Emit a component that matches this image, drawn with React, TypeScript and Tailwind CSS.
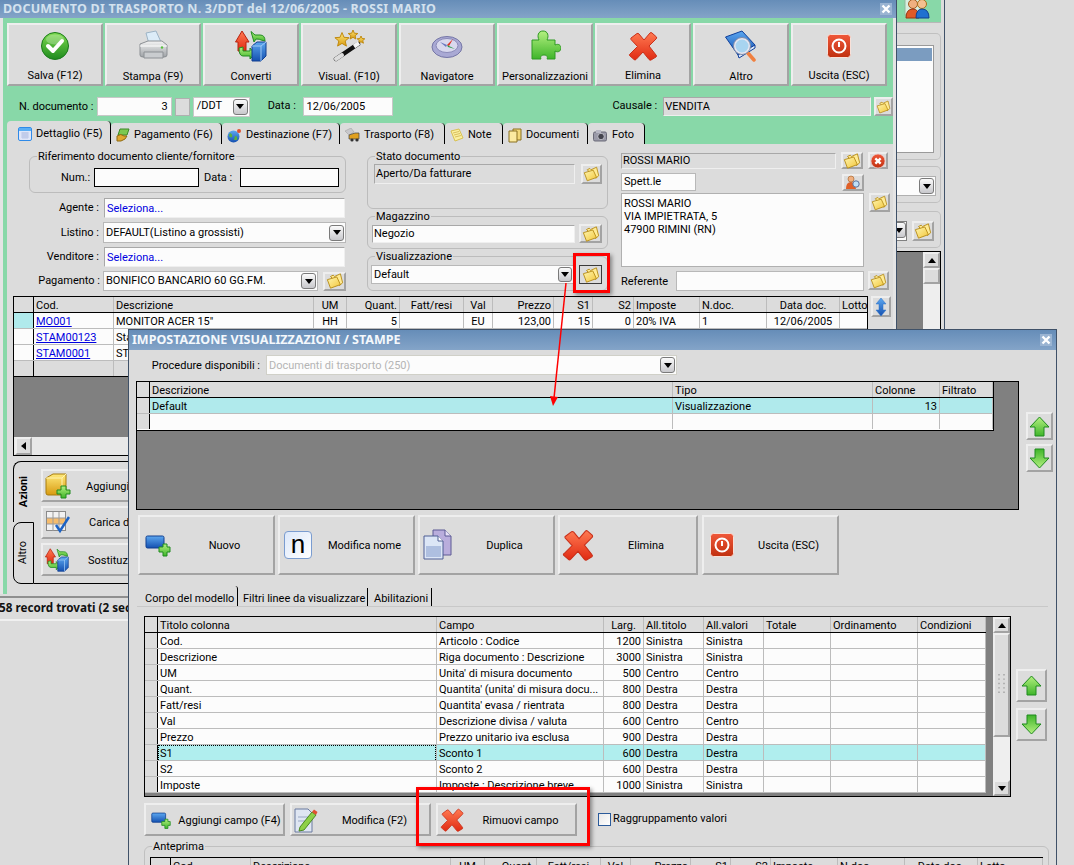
import React from 'react';

// --- icons ---
function Defs() {
  return (
    <svg className="absolute w-0 h-0">
      <defs>
        <linearGradient id="gGreen" x1="0" y1="0" x2="0" y2="1"><stop offset="0" stopColor="#7fdc50" /><stop offset="1" stopColor="#1e8a1e" /></linearGradient>
        <linearGradient id="gLime" x1="0" y1="0" x2="0" y2="1"><stop offset="0" stopColor="#b4f080" /><stop offset="1" stopColor="#3fb52a" /></linearGradient>
        <linearGradient id="gRed" x1="0" y1="0" x2="0" y2="1"><stop offset="0" stopColor="#ff7a52" /><stop offset="1" stopColor="#e02a12" /></linearGradient>
        <linearGradient id="gPower" x1="0" y1="0" x2="0" y2="1"><stop offset="0" stopColor="#f0583a" /><stop offset="1" stopColor="#c0300f" /></linearGradient>
        <linearGradient id="gFolder" x1="0" y1="0" x2="1" y2="1"><stop offset="0" stopColor="#fff6b0" /><stop offset="1" stopColor="#f2c63a" /></linearGradient>
        <linearGradient id="gBlue" x1="0" y1="0" x2="0" y2="1"><stop offset="0" stopColor="#5da8f0" /><stop offset="1" stopColor="#1450b0" /></linearGradient>
        <linearGradient id="gGrey" x1="0" y1="0" x2="0" y2="1"><stop offset="0" stopColor="#f4f4f4" /><stop offset="1" stopColor="#9ea2a6" /></linearGradient>
        <linearGradient id="gGold" x1="0" y1="0" x2="0" y2="1"><stop offset="0" stopColor="#ffe97a" /><stop offset="1" stopColor="#d89a10" /></linearGradient>
      </defs>
    </svg>
  );
}

const Folder = () => (
  <svg width="18" height="18" viewBox="0 0 20 20">
    <path d="M5 5 L8 3.5 L9.5 5 L16 2 L18.5 12 L15 15 Z" fill="#ffeb94" stroke="#b58a14" strokeLinejoin="round" />
    <path d="M1.5 8.5 L12 5.5 L16 14 L5 18 Z" fill="url(#gFolder)" stroke="#b58a14" strokeLinejoin="round" />
  </svg>
);

const DropArrow = ({ cls = 'w-[15px] h-[16px]' }: { cls?: string }) => (
  <span className={`${cls} shrink-0 flex items-center justify-center rounded-[3px] border border-[#7a7a7a] bg-gradient-to-b from-[#fbfbfb] to-[#c8c8cc]`}>
    <svg width="8" height="5" viewBox="0 0 8 5"><path d="M0 0 H8 L4 5 Z" fill="#000" /></svg>
  </span>
);

const CheckIcon = () => (
  <svg width="30" height="30" viewBox="0 0 30 30">
    <circle cx="15" cy="15" r="13.5" fill="url(#gGreen)" stroke="#1a7a1a" />
    <ellipse cx="15" cy="8.5" rx="9" ry="5" fill="#fff" opacity=".25" />
    <path d="M8 15 L13 20 L22 10" fill="none" stroke="#fff" strokeWidth="4" strokeLinecap="round" strokeLinejoin="round" />
  </svg>
);

const PrinterIcon = () => (
  <svg width="32" height="32" viewBox="0 0 32 32">
    <path d="M9 3 L19 1 L24 12 L12 14 Z" fill="#dcecf8" stroke="#9db4c6" />
    <path d="M3 14 L11 11 H25 L30 15 V25 Q30 27 27 27 H6 Q3 27 3 25 Z" fill="url(#gGrey)" stroke="#8c9094" />
    <path d="M3 16 H30" stroke="#fff" />
    <path d="M7 22 H26 V28 H7 Z" fill="#c9cccf" stroke="#8c9094" />
    <circle cx="25" cy="17.5" r="1.2" fill="#58c040" />
  </svg>
);

const ConvertIcon = ({ size = 32 }: { size?: number }) => (
  <svg width={size} height={size} viewBox="0 0 32 32">
    <path d="M7 1 L14 12 H11 V21 H3 V12 H0.5 Z" fill="url(#gRed)" stroke="#b8220f" strokeLinejoin="round" />
    <path d="M16 1.5 L20 5 H25 Q30 5 30 11 L26 10 Q25 9 21 9 L19 12 Z" fill="url(#gLime)" stroke="#218c21" strokeLinejoin="round" />
    <path d="M4 18 L8 17 V21 H15 L15 18 L20 24 L15 29 V26 H8 Q4 26 4 18 Z" fill="url(#gLime)" stroke="#218c21" strokeLinejoin="round" />
    <path d="M17 16 L22 12 H31 V26 L26 31 H17 Z" fill="url(#gBlue)" stroke="#123f90" strokeLinejoin="round" />
    <path d="M17 16 H26 V31 M26 16 L31 12" fill="none" stroke="#9cc8f4" />
  </svg>
);

const star = (cx: number, cy: number, r: number) => {
  let d = '';
  for (let i = 0; i < 10; i++) {
    const a = (Math.PI / 5) * i - Math.PI / 2;
    const rr = i % 2 ? r * 0.45 : r;
    d += `${i ? 'L' : 'M'}${(cx + rr * Math.cos(a)).toFixed(1)} ${(cy + rr * Math.sin(a)).toFixed(1)} `;
  }
  return d + 'Z';
};

const WandIcon = () => (
  <svg width="32" height="32" viewBox="0 0 32 32">
    <path d={star(9, 10, 7.5)} fill="url(#gGold)" stroke="#c08a10" />
    <path d={star(20, 5, 5)} fill="url(#gGold)" stroke="#c08a10" />
    <path d={star(28, 10, 4)} fill="url(#gGold)" stroke="#c08a10" />
    <path d="M3 29 L25 14" stroke="#111" strokeWidth="4.5" strokeLinecap="round" />
    <path d="M3 29 L9 25" stroke="#ddd" strokeWidth="4" strokeLinecap="round" />
    <path d="M21 16.5 L26 13" stroke="#f4f4f4" strokeWidth="4" />
  </svg>
);

const CompassIcon = () => (
  <svg width="32" height="32" viewBox="0 0 32 32">
    <ellipse cx="16" cy="17" rx="15" ry="10.5" fill="#a9a9d4" stroke="#7576a6" />
    <ellipse cx="16" cy="15.5" rx="11" ry="7" fill="#d9d9ee" stroke="#8a8ab8" />
    <path d="M16 15 L22 9 L18 16 Z" fill="#e03020" />
    <path d="M16 15 L24 19 L17 17 Z" fill="#2a9a4a" />
    <path d="M16 15 L9 12 L15 17 Z" fill="#6a78c0" />
  </svg>
);

const PuzzleIcon = () => (
  <svg width="32" height="32" viewBox="0 0 32 32">
    <path d="M3 10 H10 C8 6 9 1 14 1 C19 1 20 6 18 10 H26 V15 C30 13 32 16 32 18 C32 21 29 23 26 21 V29 H18 C19 27 18 25 15 25 C12 25 11 27 12 29 H3 Z" fill="url(#gLime)" stroke="#2f9a22" strokeLinejoin="round" />
  </svg>
);

const RedX = ({ size = 30 }: { size?: number }) => (
  <svg width={size} height={size} viewBox="0 0 30 30">
    <path d="M3 7 L9 2.5 Q10 2 11 3 L16 9 L22 2 Q23 1 24 2 L28.5 6 Q29 7 28 8 L21 15 L28 24 Q29 25 28 26 L23 29 Q22 29.5 21 28.5 L15 21 L8 28.5 Q7 29.5 6 28.5 L1.5 24.5 Q1 23.5 2 23 L9.5 15.5 L3 8.5 Q2.5 7.5 3 7 Z" fill="url(#gRed)" stroke="#c9301a" />
  </svg>
);

const BookIcon = () => (
  <svg width="32" height="32" viewBox="0 0 32 32">
    <path d="M0.5 7 L17 1 L30 15 L13 25 Z" fill="url(#gBlue)" stroke="#0f3f9a" />
    <path d="M13 25 L30 15 V18 L14 28 Z" fill="#dce8f8" stroke="#0f3f9a" />
    <path d="M22 22 L29 30" stroke="#f08040" strokeWidth="3.5" strokeLinecap="round" />
    <circle cx="17" cy="16" r="7.5" fill="#a8d4f0" stroke="#e6e6f0" strokeWidth="2" />
    <circle cx="17" cy="16" r="8.5" fill="none" stroke="#7c8aa8" />
  </svg>
);

const PowerIcon = ({ size = 24 }: { size?: number }) => (
  <svg width={size} height={size} viewBox="0 0 24 24">
    <rect x=".5" y=".5" width="23" height="23" rx="3" fill="url(#gPower)" stroke="#f8e0d8" />
    <circle cx="12" cy="12" r="6.5" fill="none" stroke="#fff" strokeWidth="2" />
    <path d="M12 8 V13" stroke="#fff" strokeWidth="2" />
  </svg>
);

const UsersIcon = () => (
  <svg width="26" height="26" viewBox="0 0 26 26">
    <rect x="1" y="0" width="16" height="20" fill="#d8efe0" stroke="#8fb89c" />
    <circle cx="9" cy="9" r="4.5" fill="#f0b080" stroke="#a05a20" />
    <path d="M2 23 Q2 14 9 14 Q15 14 15 23 Z" fill="#e05a28" stroke="#9a3210" />
    <circle cx="18" cy="9" r="4.5" fill="#f4c090" stroke="#a87018" />
    <path d="M12 23 Q12 14 18 14 Q25 14 25 23 Z" fill="#2070d0" stroke="#103f90" />
  </svg>
);

const NuovoIcon = ({ size = 26 }: { size?: number }) => (
  <svg width={size} height={size} viewBox="0 0 26 26">
    <rect x="1" y="4" width="18" height="12" rx="1.5" fill="url(#gBlue)" stroke="#103f90" />
    <path d="M15 12 H19 V9 H23 V12 H26 V17 H23 V21 H19 V17 H15 Z" transform="translate(-1 3)" fill="url(#gLime)" stroke="#1e8a1e" />
  </svg>
);

const NameIcon = () => (
  <span className="w-[28px] h-[28px] flex items-center justify-center rounded-[4px] border border-[#7a9cd0] bg-gradient-to-br from-[#dce8fa] to-white text-[26px] leading-[26px] text-black [font-family:'Liberation_Sans',sans-serif] pb-[3px]">n</span>
);

const DuplicaIcon = () => (
  <svg width="30" height="32" viewBox="0 0 30 32">
    <path d="M10 1 H22 L28 7 V26 H10 Z" fill="#b9addc" stroke="#5c5a94" />
    <path d="M22 1 V7 H28" fill="#e6e0f6" stroke="#5c5a94" />
    <path d="M1 7 H15 L20 12 V30 H1 Z" fill="#dce6f6" stroke="#4f5f94" />
    <path d="M15 7 V12 H20" fill="#fff" stroke="#4f5f94" />
    <rect x="3" y="17" width="15" height="11" fill="#aebfe0" />
  </svg>
);

const PencilDoc = () => (
  <svg width="24" height="26" viewBox="0 0 24 26">
    <path d="M1 2 H14 L18 6 V25 H1 Z" fill="#dfe6f2" stroke="#6b7ba0" />
    <path d="M4 10 H14 M4 14 H12" stroke="#9aa8c4" />
    <path d="M6 20 L18 5 L22 8 L10 23 L5 24 Z" fill="#8ed048" stroke="#4a8a20" strokeLinejoin="round" />
    <path d="M18 5 L20 2.5 L23.5 5 L22 8 Z" fill="#e05030" />
  </svg>
);

const GreenArrow = ({ down = false }: { down?: boolean }) => (
  <svg width="21" height="21" viewBox="0 0 21 21" className={down ? 'rotate-180' : ''}>
    <path d="M10.5 1 L20 11 H15 V20 H6 V11 H1 Z" fill="url(#gLime)" stroke="#1e8a1e" strokeLinejoin="round" />
  </svg>
);

const SpinIcon = () => (
  <svg width="12" height="18" viewBox="0 0 12 18">
    <path d="M6 0 L11 6 H8 V12 H11 L6 18 L1 12 H4 V6 H1 Z" fill="url(#gBlue)" stroke="#2a70c8" strokeWidth=".5" />
  </svg>
);

const CubeAdd = () => (
  <svg width="26" height="26" viewBox="0 0 26 26">
    <path d="M1 5 L8 1 H21 V17 L17 22 H3 Q1 22 1 20 Z" fill="url(#gGold)" stroke="#a87c0c" />
    <path d="M1 5 H17 V22 M17 5 L21 1" fill="none" stroke="#fff3b0" />
    <path d="M12 18 H16 V14 H21 V18 H25 V22 H21 V26 H16 V22 H12 Z" fill="url(#gLime)" stroke="#1e8a1e" transform="translate(0 -1)" />
  </svg>
);

const TableCheck = () => (
  <svg width="24" height="24" viewBox="0 0 24 24">
    <rect x=".5" y=".5" width="19" height="19" fill="#f2f2f2" stroke="#8a8a8a" />
    <rect x="1" y="7" width="18" height="6" fill="#f6bc6c" />
    <path d="M7 1 V20 M13 1 V20 M1 7 H19 M1 13 H19" stroke="#9a9a9a" />
    <path d="M10 14 L14 20 L23 6" fill="none" stroke="#1c62c4" strokeWidth="2.5" />
  </svg>
);

// small tab glyphs
const TabCal = () => (
  <svg width="14" height="14" viewBox="0 0 14 14"><rect x=".5" y=".5" width="13" height="13" rx="1.5" fill="#dfe6f8" stroke="#2f8ae8" /><rect x="1" y="1" width="12" height="3" fill="#5aaef4" /><path d="M3 6 H11 M3 8 H11 M3 10 H11 M5 5 V12 M7 5 V12 M9 5 V12" stroke="#9aa8d8" strokeWidth=".5" /></svg>
);
const TabPay = () => (
  <svg width="14" height="14" viewBox="0 0 14 14"><path d="M4 1 H13 L11 7 H2 Z" fill="#7cc850" stroke="#3c8a28" /><path d="M1 8 Q5 5 8 8 L11 8 L9 11 L5 13 H1 Z" fill="#e0a830" stroke="#8f6a10" /></svg>
);
const TabGlobe = () => (
  <svg width="15" height="15" viewBox="0 0 15 15"><circle cx="6.5" cy="8.5" r="6" fill="url(#gBlue)" /><path d="M3 5 Q6 6 5 9 Q2 10 2 7 Z M8 8 Q11 8 10 12 L7 12 Z" fill="#58b040" /><circle cx="12" cy="3" r="2" fill="#e05030" /></svg>
);
const TabTruck = () => (
  <svg width="15" height="14" viewBox="0 0 15 14"><path d="M0 3 L6 0 L9 4 L4 7 Z" fill="#c8c8cc" stroke="#9a9a9a" strokeWidth=".5" /><path d="M4 7 L10 5 H14 V11 H4 Z" fill="#e0a020" stroke="#444" strokeWidth=".7" /><circle cx="7" cy="12" r="1.6" fill="#333" /><circle cx="12" cy="12" r="1.6" fill="#333" /></svg>
);
const TabNote = () => (
  <svg width="14" height="14" viewBox="0 0 14 14"><path d="M1 3 L9 1 L13 10 L5 13 Z" fill="#fbf0a0" stroke="#d8c050" /><path d="M3 5 L9 3.5 M4 7 L10 5.5 M5 9 L11 7.5" stroke="#c8a840" strokeWidth=".7" /></svg>
);
const TabDocs = () => (
  <svg width="14" height="15" viewBox="0 0 14 15"><path d="M5 1 H13 V12 H5 Z" fill="#f2d878" stroke="#8a7020" /><path d="M1 3 H9 V14 H1 Z" fill="#fbeaa0" stroke="#8a7020" /></svg>
);
const TabCam = () => (
  <svg width="15" height="13" viewBox="0 0 15 13"><rect x=".5" y="3" width="13" height="9" rx="1.5" fill="#9a9aa8" stroke="#6a6a78" /><rect x="3" y="1" width="5" height="3" fill="#b8b8c4" /><circle cx="8" cy="7.5" r="3.2" fill="#44444e" stroke="#d8d8e0" strokeWidth=".7" /></svg>
);
const LookupIcon = () => (
  <svg width="16" height="16" viewBox="0 0 16 16"><path d="M1 15 Q1 8 6 8 Q10 8 11 15 Z" fill="#e06028" /><circle cx="6" cy="5" r="3" fill="#f0b080" stroke="#a05a20" strokeWidth=".6" /><circle cx="11" cy="10" r="3.2" fill="#bfe0f8" stroke="#5a7098" /></svg>
);
const CloseRed = () => (
  <svg width="18" height="18" viewBox="0 0 18 18"><circle cx="9" cy="9" r="8" fill="url(#gPower)" stroke="#e8d0d0" /><path d="M6 6 L12 12 M12 6 L6 12" stroke="#fff" strokeWidth="2.6" /></svg>
);

// --- widgets ---
const raised = 'border-2 border-t-[#eeeeee] border-l-[#eeeeee] border-r-[#a3a3a3] border-b-[#a3a3a3] bg-[#dcdcdc]';
const sunken = 'border border-t-[#a8a8a8] border-l-[#a8a8a8] border-r-[#efefef] border-b-[#efefef]';

function ToolBtn({ icon, label }: { icon: React.ReactNode; label: string }) {
  return (
    <button className={`${raised} w-[96px] h-[63px] flex flex-col items-center pt-[5px] shrink-0`}>
      <span className="h-[32px] flex items-center justify-center">{icon}</span>
      <span className="mt-[7px] leading-[16px] whitespace-nowrap text-black">{label}</span>
    </button>
  );
}

function WideBtn({ icon, label, cls, iconCls = 'w-[36px]' }: { icon: React.ReactNode; label: string; cls: string; iconCls?: string }) {
  return (
    <button className={`${raised} ${cls} flex items-center shrink-0`}>
      <span className={`${iconCls} shrink-0 flex justify-center`}>{icon}</span>
      <span className="flex-1 text-center pt-[3px] whitespace-nowrap text-black">{label}</span>
    </button>
  );
}

const FolderBtn = ({ cls, outlined = false }: { cls: string; outlined?: boolean }) => (
  <button className={`${outlined ? 'border border-[#3a3a3a] bg-[#dcdcdc]' : raised} ${cls} flex items-center justify-center shrink-0`}>
    <Folder />
  </button>
);

function Group({ title, cls, children }: { title: string; cls: string; children?: React.ReactNode }) {
  return (
    <fieldset className={`border border-[#bcbcbc] rounded-[6px] ${cls}`}>
      <legend className="ml-[7px] px-[1px] h-[14px] leading-[16px] text-black whitespace-nowrap">{title}</legend>
      {children}
    </fieldset>
  );
}

type Col = { w: number; label: string; align?: 'l' | 'r' | 'c' };
const alignCls = { l: 'text-left', r: 'text-right', c: 'text-center' };
const cellCls = 'border-r border-[#bcbcbc] px-[2px] leading-[17px] overflow-hidden whitespace-nowrap shrink-0 text-black';

function GridHeader({ cols, marker }: { cols: Col[]; marker: number }) {
  return (
    <div className="flex h-[16px] border-b border-black bg-[#dcdcdc] shrink-0">
      <div className="border-r border-black shrink-0" style={{ width: marker }} />
      {cols.map((c, i) => (
        <div key={i} className={`${alignCls[c.align ?? 'l']} ${cellCls}`} style={{ width: c.w }}>{c.label}</div>
      ))}
    </div>
  );
}

function GridRow({ cols, marker, cells, bg = 'bg-[#fcfcfc]', markBg = 'bg-[#dcdcdc]', line = 'border-[#bcbcbc]' }: { cols: Col[]; marker: number; cells: React.ReactNode[]; bg?: string; markBg?: string; line?: string }) {
  return (
    <div className={`flex h-[16px] border-b ${line} ${bg} shrink-0`}>
      <div className={`${markBg} border-r border-black shrink-0`} style={{ width: marker }} />
      {cols.map((c, i) => (
        <div key={i} className={`${alignCls[c.align ?? 'l']} ${cellCls}`} style={{ width: c.w }}>{cells[i]}</div>
      ))}
    </div>
  );
}

const TitleBar = ({ text, cls, h }: { text: string; cls: string; h: string }) => (
  <div className={`${h} shrink-0 flex items-center justify-between pl-[3px] pr-[4px] bg-gradient-to-b from-[#668db8] to-[#84a4c8]`}>
    <span className={`${cls} pt-[1px] font-bold text-[12.5px] [font-family:'Noto_Sans',sans-serif] whitespace-nowrap`}>{text}</span>
    <span className="w-[12px] h-[12px] flex items-center justify-center bg-[#9ab4d2]">
      <svg width="10" height="10" viewBox="0 0 10 10"><path d="M1.5 1.5 L8.5 8.5 M8.5 1.5 L1.5 8.5" stroke="#fff" strokeWidth="2.4" /></svg>
    </span>
  </div>
);

// --- data ---
const docCols: Col[] = [
  { w: 80, label: 'Cod.' }, { w: 200, label: 'Descrizione' }, { w: 33, label: 'UM', align: 'c' },
  { w: 53, label: 'Quant.', align: 'r' }, { w: 64, label: 'Fatt/resi', align: 'c' }, { w: 29, label: 'Val', align: 'c' },
  { w: 61, label: 'Prezzo', align: 'r' }, { w: 39, label: 'S1', align: 'r' }, { w: 41, label: 'S2', align: 'r' },
  { w: 66, label: 'Imposte' }, { w: 67, label: 'N.doc.' }, { w: 73, label: 'Data doc.', align: 'c' }, { w: 28, label: 'Lotto' },
];

const link = (s: string) => <span className="text-[#0000e0] underline">{s}</span>;

const visCols: Col[] = [
  { w: 523, label: 'Descrizione' }, { w: 200, label: 'Tipo' }, { w: 67, label: 'Colonne' }, { w: 53, label: 'Filtrato' },
];

const fieldCols: Col[] = [
  { w: 279, label: 'Titolo colonna' }, { w: 167, label: 'Campo' }, { w: 40, label: 'Larg.', align: 'c' },
  { w: 60, label: 'All.titolo' }, { w: 60, label: 'All.valori' }, { w: 67, label: 'Totale' },
  { w: 87, label: 'Ordinamento' }, { w: 68, label: 'Condizioni' },
];

const fieldRows = [
  ['Cod.', 'Articolo : Codice', '1200', 'Sinistra', 'Sinistra'],
  ['Descrizione', 'Riga documento : Descrizione', '3000', 'Sinistra', 'Sinistra'],
  ['UM', "Unita' di misura documento", '500', 'Centro', 'Centro'],
  ['Quant.', "Quantita' (unita' di misura docu...", '800', 'Destra', 'Destra'],
  ['Fatt/resi', "Quantita' evasa / rientrata", '800', 'Destra', 'Destra'],
  ['Val', 'Descrizione divisa / valuta', '600', 'Centro', 'Centro'],
  ['Prezzo', 'Prezzo unitario iva esclusa', '900', 'Destra', 'Destra'],
  ['S1', 'Sconto 1', '600', 'Destra', 'Destra'],
  ['S2', 'Sconto 2', '600', 'Destra', 'Destra'],
  ['Imposte', 'Imposte : Descrizione breve', '1000', 'Sinistra', 'Sinistra'],
];

const previewCols: Col[] = [
  { w: 80, label: 'Cod.' }, { w: 200, label: 'Descrizione' }, { w: 34, label: 'UM', align: 'c' },
  { w: 52, label: 'Quant.', align: 'r' }, { w: 64, label: 'Fatt/resi', align: 'c' }, { w: 30, label: 'Val', align: 'c' },
  { w: 60, label: 'Prezzo', align: 'r' }, { w: 40, label: 'S1', align: 'r' }, { w: 40, label: 'S2', align: 'r' },
  { w: 67, label: 'Imposte' }, { w: 67, label: 'N.doc.' }, { w: 73, label: 'Data doc.', align: 'c' }, { w: 65, label: 'Lotto' },
];

const tabs = [
  { label: 'Dettaglio (F5)', icon: <TabCal />, w: 'w-[104px]', on: true },
  { label: 'Pagamento (F6)', icon: <TabPay />, w: 'w-[111px]' },
  { label: 'Destinazione (F7)', icon: <TabGlobe />, w: 'w-[118px]' },
  { label: 'Trasporto (F8)', icon: <TabTruck />, w: 'w-[105px]' },
  { label: 'Note', icon: <TabNote />, w: 'w-[58px]' },
  { label: 'Documenti', icon: <TabDocs />, w: 'w-[85px]' },
  { label: 'Foto', icon: <TabCam />, w: 'w-[57px]' },
];

// --- windows ---
function BackWindow() {
  return (
    <div className="absolute left-0 top-0 w-[945px] h-[865px] border-r border-[#3f5168] flex flex-col">
      <div className="h-[596px] pl-[897px] shrink-0 overflow-hidden">
        <div className="w-[44px] h-[23px] bg-[#88d8a8] border-b border-[#b8b8b8] overflow-hidden pl-[7px]">
          <div className="-mt-[5px]"><UsersIcon /></div>
        </div>
        <div className="w-[44px] h-[127px] mt-[10px] border-y border-r border-[#c0c0c0] rounded-r-[5px] pt-[11px]">
          <div className="w-[37px] h-[108px] bg-[#fcfcfc] border-y border-r border-[#9a9a9a] pt-[2px]">
            <div className="h-[13px] w-[35px] bg-[#7b9cc0]" />
          </div>
        </div>
        <div className="w-[44px] h-[37px] mt-[6px] border-y border-r border-[#c0c0c0] rounded-r-[5px] pt-[9px]">
          <div className="w-[39px] h-[20px] bg-[#fcfcfc] border-y border-r border-[#b0b0b0] flex justify-end items-center pr-[1px]"><DropArrow /></div>
        </div>
        <div className="w-[44px] h-[37px] mt-[8px] border-y border-r border-[#c0c0c0] rounded-r-[5px] pt-[9px] flex items-start">
          <div className="w-[10px] h-[20px] bg-[#fcfcfc] border-y border-r border-[#808080] overflow-hidden flex justify-end"><DropArrow /></div>
          <FolderBtn cls="w-[22px] h-[20px] ml-[5px]" />
        </div>
        <div className="w-[44px] h-[90px] mt-[3px] border-t border-r border-black bg-[#808080] flex justify-end">
          <div className="w-[17px] bg-[#eeeeee]">
            <div className={`h-[16px] flex items-center justify-center ${raised}`}>
              <svg width="8" height="5" viewBox="0 0 8 5"><path d="M0 5 H8 L4 0 Z" fill="#000" /></svg>
            </div>
            <div className={`h-[16px] ${raised} bg-[#d4d6da]`} />
          </div>
        </div>
      </div>
      <div className="h-[25px] shrink-0 border-t-2 border-t-[#8f8f8f] border-b-2 border-b-[#f0f0f0] overflow-hidden">
        <span className="block -ml-[1px] leading-[19px] font-bold text-[11.7px] [font-family:'Noto_Sans',sans-serif] whitespace-nowrap text-[#111]">58 record trovati (2 secondi)</span>
      </div>
    </div>
  );
}

function DocWindow() {
  return (
    <div className="absolute left-0 top-0 w-[897px] h-[594px] border-r border-[#3f5168] bg-[#e4e4e4] flex flex-col overflow-hidden">
      <TitleBar text="DOCUMENTO DI TRASPORTO N. 3/DDT del 12/06/2005 - ROSSI MARIO" cls="text-[#d4e2ee] tracking-[0.2px]" h="h-[18px]" />
      <div className="ml-[3px] mr-[3px] flex-1 flex flex-col min-h-0">
        <div className="h-[126px] bg-[#88d8a8] shrink-0 flex flex-col">
          <div className="flex gap-[2px] pl-[4px] pt-[5px]">
            <ToolBtn icon={<CheckIcon />} label="Salva (F12)" />
            <ToolBtn icon={<PrinterIcon />} label="Stampa (F9)" />
            <ToolBtn icon={<ConvertIcon />} label="Converti" />
            <ToolBtn icon={<WandIcon />} label="Visual. (F10)" />
            <ToolBtn icon={<CompassIcon />} label="Navigatore" />
            <ToolBtn icon={<PuzzleIcon />} label="Personalizzazioni" />
            <ToolBtn icon={<RedX />} label="Elimina" />
            <ToolBtn icon={<BookIcon />} label="Altro" />
            <ToolBtn icon={<PowerIcon />} label="Uscita (ESC)" />
          </div>
          <div className="flex items-center h-[19px] mt-[11px] text-black">
            <span className="ml-[16px] w-[75px] leading-[14px] whitespace-nowrap">N. documento :</span>
            <div className="ml-[3px] w-[75px] h-[19px] bg-[#fcfcfc] border border-[#c8c8c8] text-right pr-[3px] leading-[18px]">3</div>
            <div className={`ml-[3px] w-[15px] h-[18px] bg-[#dcdcdc] border border-[#b0b0b0]`} />
            <div className="ml-[3px] w-[57px] h-[20px] bg-[#fcfcfc] border border-[#c8c8c8] flex items-center justify-between pl-[3px] pr-[1px]">/DDT<DropArrow /></div>
            <span className="ml-[18px] w-[35px] whitespace-nowrap">Data :</span>
            <div className="w-[91px] h-[19px] bg-[#fcfcfc] border border-[#c8c8c8] pl-[3px] leading-[18px]">12/06/2005</div>
            <span className="ml-[219px] w-[48px] whitespace-nowrap">Causale :</span>
            <div className={`ml-[3px] w-[208px] h-[19px] bg-[#dcdcdc] ${sunken} leading-[18px] pl-[1px]`}>VENDITA</div>
            <FolderBtn cls="ml-[3px] w-[19px] h-[19px]" />
          </div>
          <div className="flex items-end mt-[5px] pl-[4px] h-[24px]">
            {tabs.map((t) => (
              <div key={t.label} className={`${t.w} ${t.on ? 'h-[24px] pl-[11px]' : 'h-[22px] pl-[5px]'} rounded-t-[4px] bg-[#dcdcdc] border-r border-black flex items-center gap-[4px] shrink-0 text-black whitespace-nowrap pt-[2px]`}>
                {t.icon}<span>{t.label}</span>
              </div>
            ))}
          </div>
        </div>
        <div className="flex-1 border-l-4 border-[#88d8a8] bg-[#dcdcdc] flex flex-col overflow-hidden">
          <div className="flex h-[147px] shrink-0 pt-[5px]">
            {/* left column */}
            <div className="w-[333px] ml-[6px] shrink-0 text-black">
              <Group title="Riferimento documento cliente/fornitore" cls="ml-[16px] w-[317px] h-[44px]">
                <div className="flex items-center pt-[5px]">
                  <span className="ml-[31px] w-[33px] pt-[1px]">Num.:</span>
                  <div className="w-[105px] h-[19px] bg-[#fcfcfc] border border-black" />
                  <span className="ml-[5px] w-[36px] whitespace-nowrap pt-[1px]">Data :</span>
                  <div className="w-[99px] h-[19px] bg-[#fcfcfc] border border-black" />
                </div>
              </Group>
              <div className="flex items-center mt-[5px] h-[20px]">
                <span className="w-[86px] text-right pt-[1px]">Agente :</span>
                <div className={`ml-[5px] w-[241px] h-[20px] bg-[#fcfcfc] ${sunken} pl-[2px] leading-[20px] text-[#0000e0]`}>Seleziona...</div>
              </div>
              <div className="flex items-center mt-[4px] h-[21px]">
                <span className="w-[86px] text-right pt-[1px]">Listino :</span>
                <div className="ml-[4px] w-[243px] h-[21px] bg-[#fcfcfc] border border-[#b8b8b8] flex items-center justify-between pl-[2px] pr-[1px]"><span className="pt-[2px]">DEFAULT(Listino a grossisti)</span><DropArrow /></div>
              </div>
              <div className="flex items-center mt-[4px] h-[20px]">
                <span className="w-[86px] text-right pt-[1px]">Venditore :</span>
                <div className={`ml-[5px] w-[241px] h-[20px] bg-[#fcfcfc] ${sunken} pl-[2px] leading-[20px] text-[#0000e0]`}>Seleziona...</div>
              </div>
              <div className="flex items-center mt-[4px] h-[20px]">
                <span className="w-[88px] text-right pr-[1px]">Pagamento :</span>
                <div className="ml-[2px] w-[215px] h-[20px] bg-[#fcfcfc] border border-[#b8b8b8] flex items-center justify-between pl-[2px] pr-[1px]">BONIFICO BANCARIO 60 GG.FM.<DropArrow /></div>
                <FolderBtn cls="ml-[5px] w-[23px] h-[19px]" />
              </div>
            </div>
            {/* middle column */}
            <div className="w-[241px] ml-[21px] shrink-0 text-black">
              <Group title="Stato documento" cls="h-[60px]">
                <div className="flex items-start pl-[6px] pt-[1px]">
                  <div className={`w-[201px] h-[20px] bg-[#dcdcdc] ${sunken} pl-[1px] leading-[17px]`}>Aperto/Da fatturare</div>
                  <FolderBtn cls="ml-[6px] w-[21px] h-[20px]" />
                </div>
              </Group>
              <Group title="Magazzino" cls="h-[40px]">
                <div className="flex items-center pl-[4px] pt-[1px]">
                  <div className={`w-[203px] h-[18px] bg-[#fcfcfc] ${sunken} pl-[1px] leading-[16px]`}>Negozio</div>
                  <FolderBtn cls="ml-[4px] w-[23px] h-[19px]" />
                </div>
              </Group>
              <Group title="Visualizzazione" cls="h-[42px]">
                <div className="flex items-center pl-[3px] pt-[2px]">
                  <div className="w-[204px] h-[19px] bg-[#fcfcfc] border border-[#b8b8b8] flex items-center justify-between pl-[2px] pr-[2px]"><span className="pt-[2px]">Default</span><DropArrow cls="w-[14px] h-[15px]" /></div>
                  <FolderBtn outlined cls="ml-[4px] w-[23px] h-[19px]" />
                </div>
              </Group>
            </div>
            {/* right column */}
            <div className="ml-[13px] w-[270px] shrink-0 text-black pt-[3px]">
              <div className="flex items-center h-[17px]">
                <div className={`w-[215px] h-[16px] bg-[#dcdcdc] ${sunken} pl-[1px] leading-[14px]`}>ROSSI MARIO</div>
                <FolderBtn cls="ml-[5px] w-[22px] h-[17px]" />
                <button className={`${raised} ml-[5px] w-[20px] h-[17px] flex items-center justify-center`}><CloseRed /></button>
              </div>
              <div className="flex items-center justify-between w-[243px] mt-[4px] h-[18px]">
                <div className="w-[75px] h-[18px] bg-[#fcfcfc] border border-[#b8b8b8] pl-[2px] leading-[16px]">Spett.le</div>
                <button className={`${raised} w-[22px] h-[17px] flex items-center justify-center`}><LookupIcon /></button>
              </div>
              <div className="flex items-start mt-[2px]">
                <div className="w-[243px] h-[74px] bg-[#fcfcfc] border border-[#b0b0b0] pl-[2px] pt-[3px] leading-[13px]">
                  <div>ROSSI MARIO</div><div>VIA IMPIETRATA, 5</div><div>47900 RIMINI (RN)</div>
                </div>
                <FolderBtn cls="ml-[5px] w-[21px] h-[19px]" />
              </div>
              <div className="flex items-center mt-[3px] h-[21px]">
                <span className="w-[55px] pt-[3px]">Referente</span>
                <div className="w-[188px] h-[20px] bg-[#fcfcfc] border border-[#b8b8b8]" />
                <FolderBtn cls="ml-[4px] w-[21px] h-[19px]" />
              </div>
            </div>
          </div>
          {/* document lines */}
          <div className="flex items-start mt-[5px] ml-[6px] shrink-0">
            <div className="w-[855px] h-[160px] border border-black bg-[#808080] flex flex-col overflow-hidden">
              <GridHeader cols={docCols} marker={20} />
              <GridRow cols={docCols} marker={20} markBg="bg-[#b0eaec]" cells={[link('MO001'), 'MONITOR ACER 15"', 'HH', '5', '', 'EU', '123,00', '15', '0', '20% IVA', '1', '12/06/2005', '']} />
              <GridRow cols={docCols} marker={20} markBg="bg-[#fcfcfc]" cells={[link('STAM00123'), 'Stampante', '', '', '', '', '', '', '', '', '', '', '']} />
              <GridRow cols={docCols} marker={20} markBg="bg-[#fcfcfc]" cells={[link('STAM0001'), 'STAMPANTE', '', '', '', '', '', '', '', '', '', '', '']} />
              <GridRow cols={docCols} marker={20} bg="bg-[#dcdcdc]" line="border-black" cells={docCols.map(() => '')} />
              <div className="flex-1" />
              <div className="h-[18px] bg-[#e8e8e8] pl-[1px] flex shrink-0">
                <div className={`${raised} w-[17px] flex items-center justify-center`}>
                  <svg width="5" height="8" viewBox="0 0 5 8"><path d="M5 0 V8 L0 4 Z" fill="#000" /></svg>
                </div>
              </div>
            </div>
            <button className={`${raised} ml-[3px] w-[20px] h-[21px] flex items-center justify-center`}><SpinIcon /></button>
          </div>
          {/* actions */}
          <div className="flex ml-[6px] mt-[5px] h-[123px] shrink-0 text-black">
            <div className="w-[21px] shrink-0 flex flex-col">
              <div className="h-[61px] border-t border-l border-black rounded-tl-[8px] flex items-center justify-center font-bold">
                <span className="[writing-mode:vertical-rl] rotate-180">Azioni</span>
              </div>
              <div className="h-[62px] border border-black rounded-l-[8px] flex items-center justify-center">
                <span className="[writing-mode:vertical-rl] rotate-180">Altro</span>
              </div>
            </div>
            <div className="flex-1 border-t border-b border-black flex flex-col pl-[7px] pt-[7px] gap-[4px]">
              <button className={`${raised} w-[200px] h-[33px] flex items-center pl-[2px]`}><CubeAdd /><span className="ml-[15px] pt-[3px]">Aggiungi</span></button>
              <button className={`${raised} w-[200px] h-[33px] flex items-center pl-[3px]`}><TableCheck /><span className="ml-[19px] pt-[2px]">Carica da</span></button>
              <button className={`${raised} w-[200px] h-[33px] flex items-center pl-[2px]`}><ConvertIcon size={24} /><span className="ml-[19px] pt-[3px]">Sostituzione</span></button>
            </div>
          </div>
        </div>
      </div>
    </div>
  );
}

function SettingsWindow() {
  return (
    <div className="absolute left-[128px] top-[329px] w-[929px] h-[536px] border border-b-0 border-[#3f5168] bg-[#dcdcdc] flex flex-col overflow-hidden text-black">
      <TitleBar text="IMPOSTAZIONE VISUALIZZAZIONI / STAMPE" cls="text-[#f4f8fc]" h="h-[20px]" />
      <div className="flex items-center h-[20px] mt-[5px]">
        <span className="w-[131px] text-right whitespace-nowrap pt-[2px]">Procedure disponibili :</span>
        <div className="ml-[6px] w-[411px] h-[20px] bg-[#fcfcfc] border border-[#d0d0c8] flex items-center justify-between pl-[2px] pr-[1px] text-[#b4b4b4]"><span className="pt-[2px]">Documenti di trasporto (250)</span><DropArrow /></div>
      </div>
      <div className="flex items-start mt-[6px] ml-[7px]">
        <div className="w-[883px] h-[129px] border border-black bg-[#808080] shrink-0">
          <div className="w-[857px] border-r border-b border-black">
            <GridHeader cols={visCols} marker={13} />
            <GridRow cols={visCols} marker={13} bg="bg-[#b0eaec]" cells={['Default', 'Visualizzazione', <span className="block text-right">13</span>, '']} />
            <GridRow cols={visCols} marker={13} line="border-transparent" cells={['', '', '', '']} />
          </div>
        </div>
        <div className="ml-[7px] mt-[31px] flex flex-col gap-[4px] shrink-0">
          <button className={`${raised} w-[27px] h-[28px] flex items-center justify-center`}><GreenArrow /></button>
          <button className={`${raised} w-[27px] h-[28px] flex items-center justify-center`}><GreenArrow down /></button>
        </div>
      </div>
      <div className="flex items-start mt-[5px] ml-[9px] gap-[3px]">
        <WideBtn icon={<NuovoIcon />} label="Nuovo" cls="w-[137px] h-[60px]" />
        <WideBtn icon={<NameIcon />} label="Modifica nome" cls="w-[137px] h-[60px]" />
        <WideBtn icon={<DuplicaIcon />} label="Duplica" cls="w-[137px] h-[60px]" />
        <WideBtn icon={<RedX size={32} />} label="Elimina" cls="w-[140px] h-[60px]" />
        <div className="ml-[1px]"><WideBtn icon={<PowerIcon />} label="Uscita (ESC)" cls="w-[137px] h-[60px]" /></div>
      </div>
      <div className="mt-[12px] ml-[8px] mr-[8px] h-[20px] border-b border-[#c8c8c8] flex items-end shrink-0">
        <div className="w-[101px] h-[20px] rounded-t-[3px] bg-[#dcdcdc] border-r border-black pl-[8px] leading-[26px] whitespace-nowrap">Corpo del modello</div>
        <div className="w-[130px] h-[18px] border-r border-black pl-[5px] leading-[22px] whitespace-nowrap">Filtri linee da visualizzare</div>
        <div className="w-[64px] h-[18px] border-r border-black pl-[6px] leading-[22px] whitespace-nowrap">Abilitazioni</div>
      </div>
      <div className="flex items-start mt-[9px] ml-[15px]">
        <div className="w-[867px] h-[181px] border border-black bg-[#808080] flex justify-between shrink-0 overflow-hidden">
          <div className="w-[841px] shrink-0">
            <GridHeader cols={fieldCols} marker={13} />
            {fieldRows.map((r) => {
              const sel = r[0] === 'S1';
              return <GridRow key={r[0]} cols={fieldCols} marker={13} bg={sel ? 'bg-[#b0eeee]' : 'bg-[#fcfcfc]'} cells={[
                sel ? <span className="block -mx-[2px] px-[2px] outline-dotted outline-1 -outline-offset-1 outline-black">{r[0]}</span> : r[0],
                r[1], <span className="block text-right">{r[2]}</span>, r[3], r[4], '', '', '',
              ]} />;
            })}
          </div>
          <div className="w-[17px] bg-[#efefef] flex flex-col justify-between shrink-0">
            <div className="flex flex-col">
              <div className={`h-[16px] ${raised} flex items-center justify-center`}>
                <svg width="8" height="5" viewBox="0 0 8 5"><path d="M0 5 H8 L4 0 Z" fill="#000" /></svg>
              </div>
              <div className={`h-[104px] ${raised} bg-[#d6d8de] flex items-center justify-center`}>
                <svg width="7" height="22" viewBox="0 0 7 22"><path d="M1 0 V22 M6 0 V22" stroke="#a0a0a0" strokeWidth="1.4" strokeDasharray="1.4 3" /></svg>
              </div>
            </div>
            <div className={`h-[16px] ${raised} flex items-center justify-center`}>
              <svg width="8" height="5" viewBox="0 0 8 5"><path d="M0 0 H8 L4 5 Z" fill="#000" /></svg>
            </div>
          </div>
        </div>
        <div className="ml-[5px] mt-[53px] flex flex-col gap-[6px] shrink-0">
          <button className={`${raised} w-[31px] h-[33px] flex items-center justify-center`}><GreenArrow /></button>
          <button className={`${raised} w-[31px] h-[33px] flex items-center justify-center`}><GreenArrow down /></button>
        </div>
      </div>
      <div className="flex items-center mt-[6px] ml-[15px] h-[33px] shrink-0">
        <WideBtn icon={<NuovoIcon size={20} />} label="Aggiungi campo (F4)" cls="w-[141px] h-[33px]" iconCls="w-[30px]" />
        <div className="ml-[5px]"><WideBtn icon={<PencilDoc />} label="Modifica (F2)" cls="w-[141px] h-[33px]" iconCls="w-[28px]" /></div>
        <div className="ml-[5px]"><WideBtn icon={<RedX size={24} />} label="Rimuovi campo" cls="w-[141px] h-[33px]" iconCls="w-[28px]" /></div>
        <span className="ml-[21px] w-[13px] h-[13px] border border-[#2a5a9a] bg-gradient-to-br from-[#e8e8e8] to-white shrink-0" />
        <span className="ml-[2px] whitespace-nowrap">Raggruppamento valori</span>
      </div>
      <fieldset className="mt-[3px] ml-[15px] w-[905px] h-[40px] border border-[#c0c0c0] rounded-t-[6px] shrink-0 px-[5px]">
        <legend className="ml-[2px] px-[1px] h-[14px] leading-[16px]">Anteprima</legend>
        <div className="w-[893px] border border-black mt-[4px]">
          <GridHeader cols={previewCols} marker={20} />
        </div>
      </fieldset>
    </div>
  );
}

export default function App() {
  return (
    <div className="relative w-[1074px] h-[865px] bg-[#dcdcdc] overflow-hidden text-[11px] [font-family:'Roboto',sans-serif]">
      <Defs />
      <BackWindow />
      <DocWindow />
      <SettingsWindow />
      {/* annotations drawn over the screenshot */}
      <div className="absolute left-[573px] top-[253px] w-[37px] h-[40px] border-[3px] border-[#ff0000] shadow-[2px_2px_4px_rgba(0,0,0,0.4)]" />
      <div className="absolute left-[416px] top-[787px] w-[174px] h-[59px] border-[3px] border-[#ff0000] shadow-[2px_2px_4px_rgba(0,0,0,0.4)]" />
      <svg className="absolute left-[540px] top-[280px] pointer-events-none" width="40" height="130" viewBox="0 0 40 130">
        <path d="M26 3 L14 118" stroke="#ff0000" strokeWidth="1.5" fill="none" />
        <path d="M10 116 L18 117 L13 126 Z" fill="#ff0000" />
      </svg>
    </div>
  );
}
